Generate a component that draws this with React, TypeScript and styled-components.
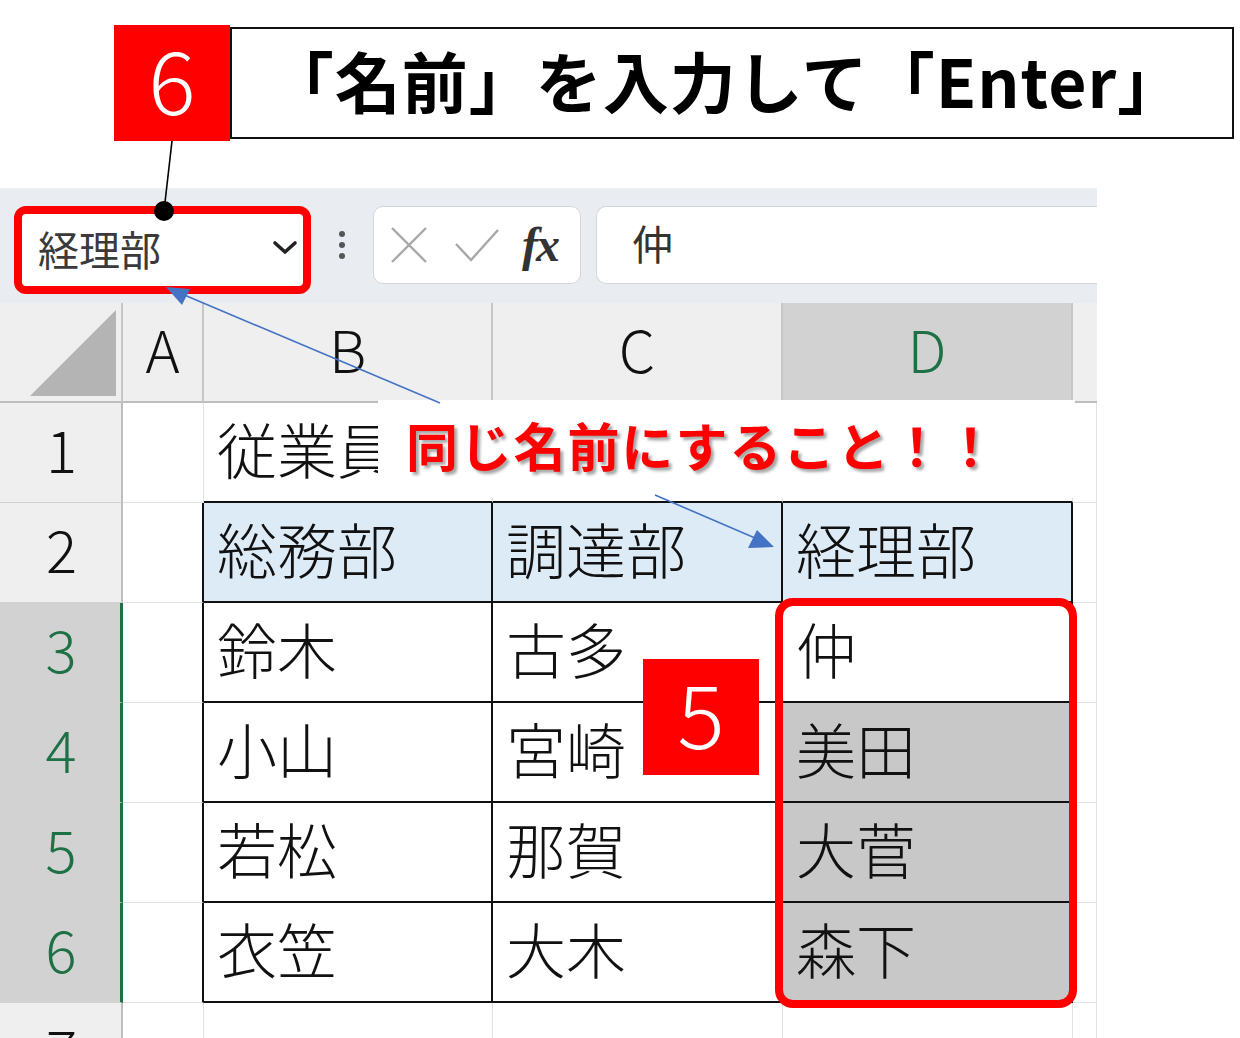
import React from "react";
import styled, { createGlobalStyle } from "styled-components";

const GlobalStyle = createGlobalStyle`
  html, body { margin: 0; padding: 0; background: #ffffff; }
  body { font-family: "Noto Sans CJK JP", "Noto Sans", sans-serif; }
  * { box-sizing: border-box; }
`;

const Page = styled.div`
  position: relative;
  width: 1240px;
  height: 1038px;
  overflow: hidden;
  background: #fff;
`;

const Header = styled.div`
  display: flex;
  align-items: flex-start;
  height: 188px;
  padding: 25px 0 0 114px;
`;

const StepBadge = styled.div`
  width: 116px;
  height: 116px;
  background: #ff0000;
  color: #fff;
  display: flex;
  align-items: center;
  justify-content: center;
  padding-bottom: 12px;
  font-family: "Noto Sans CJK JP", "Noto Sans", sans-serif;
  font-size: 88px;
  font-weight: 300;
  line-height: 1;
  flex-shrink: 0;
`;

const FloatingBadge = styled(StepBadge)<{ $x: number; $y: number }>`
  position: absolute;
  left: ${(p) => p.$x}px;
  top: ${(p) => p.$y}px;
`;

const TitleBox = styled.div`
  margin-top: 2px;
  width: 1004px;
  height: 112px;
  border: 2px solid #111;
  display: flex;
  align-items: center;
  justify-content: center;
  padding: 0 12px 8px 0;
  font-size: 66px;
  font-weight: 700;
  letter-spacing: 1px;
  color: #000;
  line-height: 1;
`;

const Toolbar = styled.div`
  width: 1097px;
  height: 115px;
  background: #e9ecf0;
  display: flex;
  align-items: flex-start;
  padding: 17px 0 0 14px;
  border-top: 1px solid #eef0f3;
`;

const NameBox = styled.div`
  width: 297px;
  height: 88px;
  border: 8px solid #ff0000;
  border-radius: 12px;
  background: #fff;
  display: flex;
  align-items: center;
  justify-content: space-between;
  padding: 0 5px 4px 16px;
  font-size: 41px;
  color: #3a3a3a;
  line-height: 1;
`;

const Kebab = styled.div`
  width: 62px;
  height: 78px;
  display: flex;
  flex-direction: column;
  align-items: center;
  justify-content: center;
  gap: 5px;
`;

const KebabDot = styled.span`
  width: 6px;
  height: 6px;
  border-radius: 50%;
  background: #555;
`;

const FxGroup = styled.div`
  width: 208px;
  height: 78px;
  background: #fff;
  border: 1px solid #d4d6d9;
  border-radius: 10px;
  display: flex;
  align-items: center;
  padding: 0 0 0 16px;
  gap: 26px;
`;

const FxLabel = styled.span`
  font-family: "Liberation Serif", "DejaVu Serif", serif;
  font-style: italic;
  font-weight: 700;
  font-size: 48px;
  color: #333;
  line-height: 1;
  margin-left: -4px;
  letter-spacing: -2px;
`;

const FormulaInput = styled.div`
  margin-left: 15px;
  flex: 1;
  height: 78px;
  background: #fff;
  border: 1px solid #d4d6d9;
  border-right: none;
  border-radius: 10px 0 0 10px;
  display: flex;
  align-items: center;
  padding: 0 0 6px 35px;
  font-size: 41px;
  color: #333;
  line-height: 1;
`;

const Sheet = styled.div`
  display: grid;
  width: 1097px;
  grid-template-columns: 123px 81px 289px 290px 290px 24px;
  grid-auto-rows: 100px;
`;

const Corner = styled.div`
  background: #efefef;
  border-right: 2px solid #c6c6c6;
  border-bottom: 2px solid #bdbdbd;
  display: flex;
  align-items: flex-end;
  justify-content: flex-end;
  padding: 0 5px 5px 0;
`;

const ColHead = styled.div<{ $sel?: boolean; $last?: boolean }>`
  background: ${(p) => (p.$sel ? "#d2d2d2" : "#efefef")};
  border-right: ${(p) => (p.$last ? "none" : "2px solid #c6c6c6")};
  border-bottom: ${(p) => (p.$sel ? "3px solid #1e7145" : "2px solid #bdbdbd")};
  color: ${(p) => (p.$sel ? "#1e7145" : "#111")};
  display: flex;
  align-items: center;
  justify-content: center;
  padding-bottom: 8px;
  font-size: 58px;
  font-weight: 300;
  line-height: 1;
`;

const RowHead = styled.div<{ $sel?: boolean }>`
  background: ${(p) => (p.$sel ? "#d2d2d2" : "#efefef")};
  border-right: ${(p) => (p.$sel ? "3px solid #1e7145" : "2px solid #bdbdbd")};
  border-bottom: 1px solid #d0d0d0;
  color: ${(p) => (p.$sel ? "#1e7145" : "#111")};
  display: flex;
  align-items: center;
  justify-content: center;
  font-size: 58px;
  font-weight: 300;
  line-height: 1;
  padding: 0 0 10px 2px;
`;

type Tone = "plain" | "head" | "sel";

const Cell = styled.div<{ $tone: Tone; $r: boolean; $b: boolean }>`
  background: ${(p) =>
    p.$tone === "head" ? "#ddebf7" : p.$tone === "sel" ? "#c8c8c8" : "#ffffff"};
  border-right: ${(p) => (p.$r ? "2px solid #111" : "1px solid #e1e1e1")};
  border-bottom: ${(p) => (p.$b ? "2px solid #111" : "1px solid #e1e1e1")};
  display: flex;
  align-items: center;
  padding: 0 0 8px 13px;
  font-size: 60px;
  font-weight: 300;
  color: #111;
  line-height: 1;
  white-space: nowrap;
  overflow: visible;
`;

const Overlay = styled.svg`
  position: absolute;
  left: 0;
  top: 0;
  width: 1240px;
  height: 1038px;
  pointer-events: none;
`;

const Callout = styled.div`
  position: absolute;
  left: 378px;
  top: 400px;
  width: 697px;
  height: 98px;
  background: #fff;
  display: flex;
  align-items: center;
  padding: 0 0 8px 28px;
  font-size: 52px;
  font-weight: 700;
  color: #ff0000;
  letter-spacing: 1.8px;
  line-height: 1;
  text-shadow: 3px 3px 3px rgba(0, 0, 0, 0.35);
`;

const RangeRing = styled.div`
  position: absolute;
  left: 775px;
  top: 598px;
  width: 302px;
  height: 410px;
  border: 8px solid #ff0000;
  border-radius: 18px;
`;

type CellDef = { text?: string; tone?: Tone; r?: boolean; b?: boolean };

const table: string[][] = [
  ["総務部", "調達部", "経理部"],
  ["鈴木", "古多", "仲"],
  ["小山", "宮崎", "美田"],
  ["若松", "那賀", "大菅"],
  ["衣笠", "大木", "森下"],
];

function buildRow(rowNo: number): CellDef[] {
  if (rowNo === 1) {
    return [{}, { text: "従業員一覧", b: true }, { b: true }, { b: true }, {}];
  }
  if (rowNo >= 2 && rowNo <= 6) {
    const vals = table[rowNo - 2];
    return [
      { r: true },
      { text: vals[0], r: true, b: true, tone: rowNo === 2 ? "head" : "plain" },
      { text: vals[1], r: true, b: true, tone: rowNo === 2 ? "head" : "plain" },
      {
        text: vals[2],
        r: true,
        b: true,
        tone: rowNo === 2 ? "head" : rowNo === 3 ? "plain" : "sel",
      },
      {},
    ];
  }
  return [{}, {}, {}, {}, {}];
}

const XIcon = () => (
  <svg width="38" height="38" viewBox="0 0 38 38">
    <path d="M2 2 L36 36 M36 2 L2 36" stroke="#a8a8a8" strokeWidth="2.4" fill="none" />
  </svg>
);

const CheckIcon = () => (
  <svg width="46" height="36" viewBox="0 0 46 36">
    <path d="M2 17 L17 33 L44 3" stroke="#a8a8a8" strokeWidth="2.4" fill="none" />
  </svg>
);

const Chevron = () => (
  <svg width="26" height="16" viewBox="0 0 26 16">
    <path d="M3 3 L13 12 L23 3" stroke="#222" strokeWidth="3.6" fill="none" strokeLinecap="round" strokeLinejoin="round" />
  </svg>
);

const CornerTriangle = () => (
  <svg width="86" height="86" viewBox="0 0 86 86">
    <polygon points="86,0 86,86 0,86" fill="#b4b4b4" />
  </svg>
);

export default function App() {
  const rows = [1, 2, 3, 4, 5, 6, 7];
  return (
    <Page>
      <GlobalStyle />
      <Header>
        <StepBadge>6</StepBadge>
        <TitleBox>「名前」を入力して「Enter」</TitleBox>
      </Header>
      <Toolbar>
        <NameBox>
          <span>経理部</span>
          <Chevron />
        </NameBox>
        <Kebab>
          <KebabDot />
          <KebabDot />
          <KebabDot />
        </Kebab>
        <FxGroup>
          <XIcon />
          <CheckIcon />
          <FxLabel>fx</FxLabel>
        </FxGroup>
        <FormulaInput>仲</FormulaInput>
      </Toolbar>
      <Sheet>
        <Corner>
          <CornerTriangle />
        </Corner>
        {["A", "B", "C", "D"].map((c) => (
          <ColHead key={c} $sel={c === "D"}>
            {c}
          </ColHead>
        ))}
        <ColHead $last />
        {rows.map((n) => (
          <React.Fragment key={n}>
            <RowHead $sel={n >= 3 && n <= 6}>{n}</RowHead>
            {buildRow(n).map((c, i) => (
              <Cell key={i} $tone={c.tone ?? "plain"} $r={!!c.r} $b={!!c.b}>
                {c.text}
              </Cell>
            ))}
          </React.Fragment>
        ))}
      </Sheet>

      <Callout>同じ名前にすること！！</Callout>
      <RangeRing />
      <FloatingBadge $x={643} $y={659}>5</FloatingBadge>

      <Overlay viewBox="0 0 1240 1038">
        <line x1="172" y1="141" x2="164" y2="211" stroke="#000" strokeWidth="1.6" />
        <circle cx="164" cy="211" r="10" fill="#000" />
        <line x1="440" y1="403" x2="182" y2="294" stroke="#4472c4" strokeWidth="1.6" />
        <polygon points="166,287 190,289 182,305" fill="#4472c4" />
        <line x1="655" y1="495" x2="755" y2="538" stroke="#4472c4" strokeWidth="1.6" />
        <polygon points="774,547 748,548 757,530" fill="#4472c4" />
      </Overlay>
    </Page>
  );
}
